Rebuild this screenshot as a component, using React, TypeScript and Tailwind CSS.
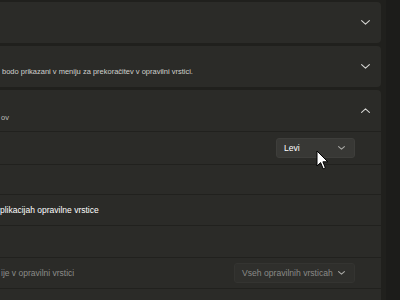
import type { ReactNode } from "react";

const font = { fontFamily: '"Liberation Sans", Arial, sans-serif' };

function Chevron({ up = false, small = false }: { readonly up?: boolean; readonly small?: boolean }) {
  const w = small ? 7 : 9;
  const h = small ? 4 : 5;
  return (
    <svg width={w} height={h} viewBox={`0 0 ${w} ${h}`} fill="none" className="shrink-0">
      <path
        d={up ? `M0.6 ${h - 0.6} L${w / 2} 0.8 L${w - 0.6} ${h - 0.6}` : `M0.6 0.6 L${w / 2} ${h - 0.8} L${w - 0.6} 0.6`}
        stroke={small ? "#a9a9a6" : "#d6d6d3"}
        strokeWidth="1.1"
        strokeLinecap="round"
        strokeLinejoin="round"
      />
    </svg>
  );
}

function Dropdown({ label, disabled = false, width }: { readonly label: string; readonly disabled?: boolean; readonly width: string }) {
  return (
    <div
      className={`${width} h-[20px] rounded-[3px] flex items-center justify-between pl-[7px] pr-[9px] border ${
        disabled ? "bg-[#2f2f2c] border-[#343431] text-[#8a8a87]" : "bg-[#383835] border-[#3e3e3b] text-white"
      }`}
    >
      <span className="text-[8.6px] leading-none">{label}</span>
      <Chevron small />
    </div>
  );
}

function Row({ h, children }: { readonly h: string; readonly children?: ReactNode }) {
  return (
    <div className={`${h} shrink-0 border-t border-[#21211e] flex items-center justify-between pr-[26px]`}>
      {children}
    </div>
  );
}

export default function App() {
  return (
    <div className="relative w-[400px] h-[300px] overflow-hidden bg-[#1c1c1a] flex" style={font}>
      <div className="w-[386px] h-full bg-[#20201d] pr-[5px] pt-[2px] flex flex-col gap-[3px] overflow-hidden">
        <div className="h-[41px] shrink-0 bg-[#2b2b28] rounded-r-[4px] flex items-center justify-end pr-[11px]">
          <Chevron />
        </div>

        <div className="h-[41px] shrink-0 bg-[#2b2b28] rounded-r-[4px] flex items-center justify-between pr-[11px]">
          <span className="pl-[2px] pt-[11px] text-[7.5px] text-[#d0d0cd]">
            bodo prikazani v meniju za prekoračitev v opravilni vrstici.
          </span>
          <Chevron />
        </div>

        <div className="shrink-0 bg-[#2b2b28] rounded-tr-[4px] flex flex-col">
          <div className="h-[41px] shrink-0 flex items-center justify-between pr-[11px]">
            <span className="pl-[1px] pt-[14px] text-[7.5px] text-[#bdbdba]">ov</span>
            <Chevron up />
          </div>
          <Row h="h-[33px]">
            <span />
            <Dropdown label="Levi" width="w-[79px]" />
          </Row>
          <Row h="h-[30px]" />
          <Row h="h-[31px]">
            <span className="text-[8.5px] text-white">plikacijah opravilne vrstice</span>
          </Row>
          <Row h="h-[32px]" />
          <Row h="h-[31px]">
            <span className="pl-[1px] text-[8.5px] text-[#8c8c89]">ije v opravilni vrstici</span>
            <Dropdown label="Vseh opravilnih vrsticah" disabled width="w-[121px]" />
          </Row>
          <Row h="h-[31px]">
            <span className="pl-[4px] text-[8.5px] text-[#8c8c89]">lični vrstici</span>
          </Row>
        </div>
      </div>

      <svg className="absolute left-[316px] top-[150px]" width="14" height="21" viewBox="0 0 14 21">
        <path
          d="M1 1 L1 16 L4.6 12.6 L7.2 18.8 L9.4 17.9 L6.9 11.8 L11.8 11.8 Z"
          fill="#ffffff"
          stroke="#000000"
          strokeWidth="1"
          strokeLinejoin="round"
        />
      </svg>
    </div>
  );
}
